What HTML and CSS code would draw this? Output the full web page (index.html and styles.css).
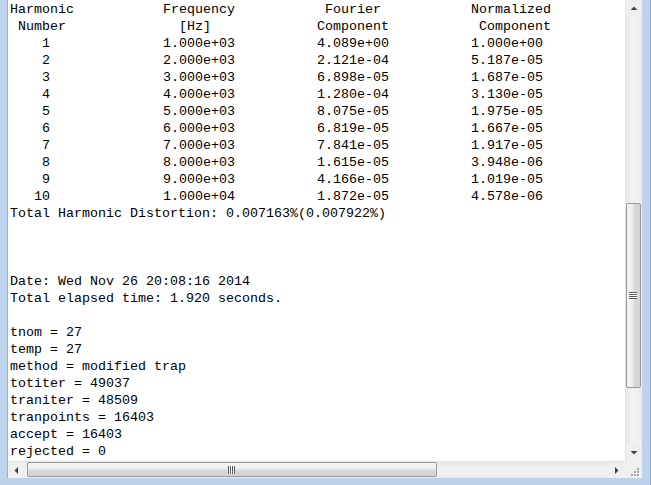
FILE: index.html
```html
<!DOCTYPE html>
<html>
<head>
<meta charset="utf-8">
<title>Output</title>
<link rel="stylesheet" href="styles.css">
</head>
<body>
<div class="window">
  <div class="frame">
    <div class="main">
      <div class="output">
        <div class="table">
          <div class="row"><span>Harmonic</span><span>Frequency</span><span> Fourier</span><span>Normalized</span></div>
          <div class="row"><span> Number</span><span>  [Hz]</span><span>Component</span><span> Component</span></div>
          <div class="row"><span>    1</span><span>1.000e+03</span><span>4.089e+00</span><span>1.000e+00</span></div>
          <div class="row"><span>    2</span><span>2.000e+03</span><span>2.121e-04</span><span>5.187e-05</span></div>
          <div class="row"><span>    3</span><span>3.000e+03</span><span>6.898e-05</span><span>1.687e-05</span></div>
          <div class="row"><span>    4</span><span>4.000e+03</span><span>1.280e-04</span><span>3.130e-05</span></div>
          <div class="row"><span>    5</span><span>5.000e+03</span><span>8.075e-05</span><span>1.975e-05</span></div>
          <div class="row"><span>    6</span><span>6.000e+03</span><span>6.819e-05</span><span>1.667e-05</span></div>
          <div class="row"><span>    7</span><span>7.000e+03</span><span>7.841e-05</span><span>1.917e-05</span></div>
          <div class="row"><span>    8</span><span>8.000e+03</span><span>1.615e-05</span><span>3.948e-06</span></div>
          <div class="row"><span>    9</span><span>9.000e+03</span><span>4.166e-05</span><span>1.019e-05</span></div>
          <div class="row"><span>   10</span><span>1.000e+04</span><span>1.872e-05</span><span>4.578e-06</span></div>
        </div>
<pre class="log">Total Harmonic Distortion: 0.007163%(0.007922%)



Date: Wed Nov 26 20:08:16 2014
Total elapsed time: 1.920 seconds.

tnom = 27
temp = 27
method = modified trap
totiter = 49037
traniter = 48509
tranpoints = 16403
accept = 16403
rejected = 0</pre>
      </div>
      <div class="vscroll">
        <div class="btn">
          <svg width="17" height="17" viewBox="0 0 17 17"><polygon points="5,10 8.5,6.5 12,10" fill="#404040"/></svg>
        </div>
        <div class="vtrack">
          <div class="vthumb">
            <svg width="8" height="8" viewBox="0 0 8 8">
              <rect x="0" y="0" width="8" height="1" fill="#5b5b5b"/>
              <rect x="0" y="1" width="8" height="1" fill="#ffffff"/>
              <rect x="0" y="2" width="8" height="1" fill="#5b5b5b"/>
              <rect x="0" y="3" width="8" height="1" fill="#ffffff"/>
              <rect x="0" y="4" width="8" height="1" fill="#5b5b5b"/>
              <rect x="0" y="5" width="8" height="1" fill="#ffffff"/>
              <rect x="0" y="6" width="8" height="1" fill="#5b5b5b"/>
            </svg>
          </div>
        </div>
        <div class="btn">
          <svg width="17" height="17" viewBox="0 0 17 17"><polygon points="5,7 12,7 8.5,10.5" fill="#404040"/></svg>
        </div>
      </div>
    </div>
    <div class="bottom">
      <div class="hscroll">
        <div class="btn">
          <svg width="17" height="17" viewBox="0 0 17 17"><polygon points="10,5 10,12 6.5,8.5" fill="#404040"/></svg>
        </div>
        <div class="htrack">
          <div class="hthumb">
            <svg width="8" height="8" viewBox="0 0 8 8">
              <rect x="0" y="0" width="1" height="8" fill="#5b5b5b"/>
              <rect x="1" y="0" width="1" height="8" fill="#ffffff"/>
              <rect x="2" y="0" width="1" height="8" fill="#5b5b5b"/>
              <rect x="3" y="0" width="1" height="8" fill="#ffffff"/>
              <rect x="4" y="0" width="1" height="8" fill="#5b5b5b"/>
              <rect x="5" y="0" width="1" height="8" fill="#ffffff"/>
              <rect x="6" y="0" width="1" height="8" fill="#5b5b5b"/>
            </svg>
          </div>
        </div>
        <div class="btn">
          <svg width="17" height="17" viewBox="0 0 17 17"><polygon points="7,5 7,12 10.5,8.5" fill="#404040"/></svg>
        </div>
      </div>
      <div class="sizegrip">
        <svg width="17" height="17" viewBox="0 0 17 17">
          <g fill="#ffffff">
            <rect x="13" y="14" width="2" height="2"/><rect x="10" y="14" width="2" height="2"/><rect x="7" y="14" width="2" height="2"/>
            <rect x="13" y="11" width="2" height="2"/><rect x="10" y="11" width="2" height="2"/><rect x="13" y="8" width="2" height="2"/>
          </g>
          <g fill="#a4a4a4">
            <rect x="12" y="13" width="2" height="2"/><rect x="9" y="13" width="2" height="2"/><rect x="6" y="13" width="2" height="2"/>
            <rect x="12" y="10" width="2" height="2"/><rect x="9" y="10" width="2" height="2"/><rect x="12" y="7" width="2" height="2"/>
          </g>
        </svg>
      </div>
    </div>
  </div>
</div>
</body>
</html>
```

FILE: styles.css
```css
html, body {
  margin: 0;
  padding: 0;
  background: #bfd4ec;
}

.window {
  width: 651px;
  height: 485px;
  box-sizing: border-box;
  padding: 0 8px 7px 7px;
  background: #bdd3ec;
  border-right: 1px solid #8ea6c2;
  display: flex;
}

.frame {
  flex: 1;
  display: flex;
  flex-direction: column;
  border-left: 1px solid #a3aebb;
  background: #ffffff;
  min-width: 0;
}

.main {
  flex: 1;
  display: flex;
  min-height: 0;
}

.output {
  flex: 1;
  overflow: hidden;
  padding: 1px 0 0 2px;
  font-family: "Liberation Mono", "Courier New", monospace;
  font-size: 13.333px;
  line-height: 17px;
  color: #000000;
  background: #ffffff;
}

.row {
  display: grid;
  grid-template-columns: 153px 154px 154px auto;
  white-space: pre;
  height: 17px;
}

.log {
  margin: 0;
  font: inherit;
  white-space: pre;
}

.vscroll {
  width: 17px;
  display: flex;
  flex-direction: column;
  background: #efefef;
  border-left: 1px solid #e4e4e4;
  box-sizing: border-box;
}

.btn {
  width: 17px;
  height: 17px;
  flex: none;
  display: flex;
  align-items: center;
  justify-content: center;
}

.vscroll .btn {
  width: 16px;
}

.btn svg {
  display: block;
}

.vtrack {
  flex: 1;
  display: flex;
  flex-direction: column;
  background: linear-gradient(to right, #e6e6e6, #f2f2f2 40%, #f2f2f2 70%, #e9e9e9);
}

.vthumb {
  margin-top: 186px;
  margin-left: 0;
  width: 15px;
  height: 185px;
  box-sizing: border-box;
  border: 1px solid #9a9a9a;
  border-radius: 2px;
  background: linear-gradient(to right, #f5f5f5, #ececec 45%, #d9d9d9 55%, #d3d3d3);
  display: flex;
  align-items: center;
  justify-content: center;
}

.vthumb svg {
  margin-left: -1px;
}

.bottom {
  height: 17px;
  flex: none;
  display: flex;
}

.hscroll {
  flex: 1;
  display: flex;
  background: #efefef;
  border-top: 1px solid #e4e4e4;
  box-sizing: border-box;
}

.hscroll .btn {
  height: 16px;
}

.htrack {
  flex: 1;
  display: flex;
  align-items: flex-start;
  background: linear-gradient(to bottom, #e6e6e6, #f2f2f2 40%, #f2f2f2 70%, #e9e9e9);
}

.hthumb {
  margin-left: 2px;
  width: 410px;
  height: 15px;
  box-sizing: border-box;
  border: 1px solid #9a9a9a;
  border-radius: 2px;
  background: linear-gradient(to bottom, #f5f5f5, #ececec 45%, #d9d9d9 55%, #d3d3d3);
  display: flex;
  align-items: center;
  justify-content: center;
}

.sizegrip {
  width: 17px;
  height: 17px;
  flex: none;
  background: #efefef;
}

.sizegrip svg {
  display: block;
}
```
